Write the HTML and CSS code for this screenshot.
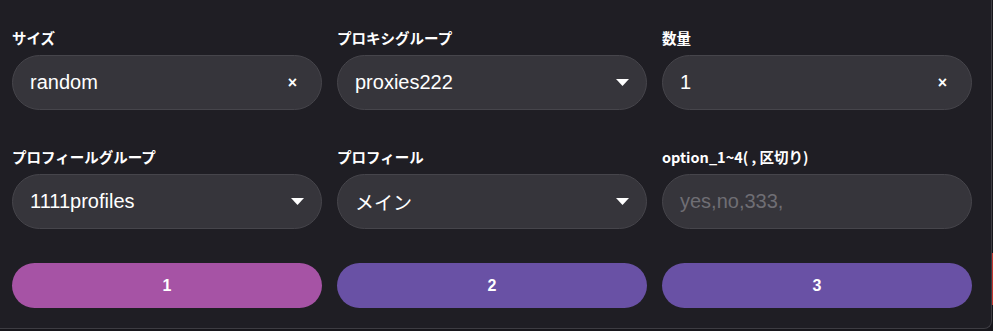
FILE: index.html
```html
<!DOCTYPE html>
<html lang="ja">
<head>
<meta charset="UTF-8" />
<meta name="viewport" content="width=device-width, initial-scale=1" />
<title>設定</title>
<link rel="stylesheet" href="styles.css">
</head>
<body>
<div class="panel">
  <div class="grid">
    <div class="field">
      <label class="label">サイズ</label>
      <div class="control">
        <span class="value">random</span>
        <span class="clear">&times;</span>
      </div>
    </div>
    <div class="field">
      <label class="label">プロキシグループ</label>
      <div class="control">
        <span class="value">proxies222</span>
        <svg class="caret" width="13" height="7" viewBox="0 0 13 7"><path d="M0 0h13L6.5 7z" fill="#fff"/></svg>
      </div>
    </div>
    <div class="field">
      <label class="label">数量</label>
      <div class="control">
        <span class="value">1</span>
        <span class="clear">&times;</span>
      </div>
    </div>

    <div class="field">
      <label class="label">プロフィールグループ</label>
      <div class="control">
        <span class="value">1111profiles</span>
        <svg class="caret" width="13" height="7" viewBox="0 0 13 7"><path d="M0 0h13L6.5 7z" fill="#fff"/></svg>
      </div>
    </div>
    <div class="field">
      <label class="label">プロフィール</label>
      <div class="control">
        <span class="value jp">メイン</span>
        <svg class="caret" width="13" height="7" viewBox="0 0 13 7"><path d="M0 0h13L6.5 7z" fill="#fff"/></svg>
      </div>
    </div>
    <div class="field">
      <label class="label">option_1~4( , 区切り)</label>
      <div class="control">
        <span class="value placeholder">yes,no,333,</span>
      </div>
    </div>
  </div>

  <div class="actions">
    <button class="btn pink">1</button>
    <button class="btn purple">2</button>
    <button class="btn purple">3</button>
  </div>
</div>
<div class="edge-mark"></div>
</body>
</html>
```

FILE: styles.css
```css
* {
  margin: 0;
  padding: 0;
  box-sizing: border-box;
}

body {
  background: #17161b;
  display: flex;
  align-items: flex-start;
  width: 993px;
  height: 331px;
  overflow: hidden;
}

.panel {
  width: 992px;
  height: 329px;
  background: #1f1e24;
  border-right: 1px solid #3d3c42;
  border-bottom: 1px solid #3d3c42;
  border-bottom-right-radius: 8px;
  padding: 29px 20px 0 12px;
}

.grid {
  display: grid;
  grid-template-columns: repeat(3, 310px);
  column-gap: 15px;
  row-gap: 38px;
}

.label {
  display: block;
  height: 18px;
  margin-bottom: 8px;
  font-family: "Noto Sans CJK JP", "Noto Sans", sans-serif;
  font-weight: 700;
  font-size: 14.5px;
  line-height: 18px;
  color: #fff;
}

.control {
  height: 55px;
  border-radius: 28px;
  background: #36353b;
  border: 1px solid #46454b;
  display: flex;
  align-items: center;
  justify-content: space-between;
  padding: 0 16px 0 17px;
}

.value {
  font-family: "Liberation Sans", Arial, sans-serif;
  font-size: 20px;
  color: #fff;
}

.value.jp {
  font-family: "Noto Sans CJK JP", sans-serif;
  font-size: 19px;
}

.placeholder {
  color: #6f6e74;
}

.clear {
  font-family: "Liberation Sans", Arial, sans-serif;
  font-weight: 700;
  font-size: 16px;
  color: #fff;
  margin-right: 8px;
}

.caret {
  display: block;
  margin-right: 1px;
}

.actions {
  display: grid;
  grid-template-columns: repeat(3, 310px);
  column-gap: 15px;
  margin-top: 34px;
}

.btn {
  height: 45px;
  border: none;
  border-radius: 23px;
  font-family: "Liberation Sans", Arial, sans-serif;
  font-weight: 700;
  font-size: 16px;
  color: #fff;
}

.btn.pink {
  background: #a653a5;
}

.btn.purple {
  background: #6951a5;
}

.edge-mark {
  width: 1px;
  height: 52px;
  margin-top: 253px;
  background: #c3352f;
}
```
